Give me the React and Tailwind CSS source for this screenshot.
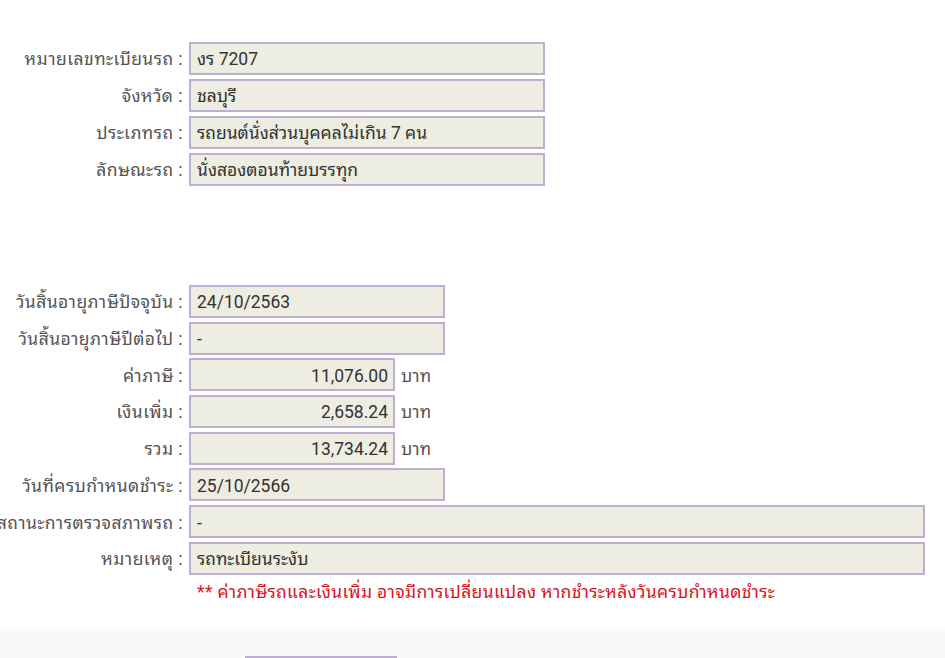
import React from 'react';

const topRows = [
  { label: 'หมายเลขทะเบียนรถ', value: 'งร 7207' },
  { label: 'จังหวัด', value: 'ชลบุรี' },
  { label: 'ประเภทรถ', value: 'รถยนต์นั่งส่วนบุคคลไม่เกิน 7 คน' },
  { label: 'ลักษณะรถ', value: 'นั่งสองตอนท้ายบรรทุก' },
];

const Row = ({ label, children }) => (
  <div className="flex items-center h-[33px]">
    <div className="w-[183px] shrink-0 text-[#555] flex justify-end pt-[2px]">
      <span className="whitespace-nowrap tracking-[0.45px]">{label} :</span>
    </div>
    <div className="ml-[6px] flex items-center h-full">{children}</div>
  </div>
);

const Box = ({ width, align = 'left', children }) => (
  <div
    className={`h-[33px] border-2 border-[#bfaed3] bg-[#eeede1] flex items-center pt-[2px] text-[#333] whitespace-nowrap ${
      align === 'right' ? 'justify-end pr-[5px]' : 'pl-[6px]'
    } ${width}`}
  >
    {children}
  </div>
);

export default function App() {
  return (
    <div
      className="w-[945px] h-[658px] overflow-hidden bg-white text-[17.5px]"
      style={{ fontFamily: 'Roboto, "Noto Sans Thai Looped", "Noto Serif Thai", "Noto Sans Thai", sans-serif' }}
    >
      <div className="pt-[42px] flex flex-col gap-[4px]">
        {topRows.map((r) => (
          <Row key={r.label} label={r.label}>
            <Box width="w-[356px]">{r.value}</Box>
          </Row>
        ))}
      </div>

      <div className="mt-[99px] flex flex-col gap-[3.7px]">
        <Row label="วันสิ้นอายุภาษีปัจจุบัน">
          <Box width="w-[256px]">24/10/2563</Box>
        </Row>
        <Row label="วันสิ้นอายุภาษีปีต่อไป">
          <Box width="w-[256px]">-</Box>
        </Row>
        <Row label="ค่าภาษี">
          <Box width="w-[206px]" align="right">11,076.00</Box>
          <span className="ml-[6px] pt-[2px] text-[#555]">บาท</span>
        </Row>
        <Row label="เงินเพิ่ม">
          <Box width="w-[206px]" align="right">2,658.24</Box>
          <span className="ml-[6px] pt-[2px] text-[#555]">บาท</span>
        </Row>
        <Row label="รวม">
          <Box width="w-[206px]" align="right">13,734.24</Box>
          <span className="ml-[6px] pt-[2px] text-[#555]">บาท</span>
        </Row>
        <Row label="วันที่ครบกำหนดชำระ">
          <Box width="w-[256px]">25/10/2566</Box>
        </Row>
        <Row label="สถานะการตรวจสภาพรถ">
          <Box width="w-[736px]">-</Box>
        </Row>
        <Row label="หมายเหตุ">
          <Box width="w-[736px]">รถทะเบียนระงับ</Box>
        </Row>
      </div>

      <div className="pl-[197px] mt-[5px] h-[24px] leading-[24px] text-[#d8141b] whitespace-nowrap tracking-[0.35px]">
        ** ค่าภาษีรถและเงินเพิ่ม อาจมีการเปลี่ยนแปลง หากชำระหลังวันครบกำหนดชำระ
      </div>

      <div className="mt-[25px] h-[29px] bg-[#f9f9f9] pl-[245px] pt-[27px]">
        <div className="w-[152px] h-[2px] bg-[#bfaed3]" />
      </div>
    </div>
  );
}
